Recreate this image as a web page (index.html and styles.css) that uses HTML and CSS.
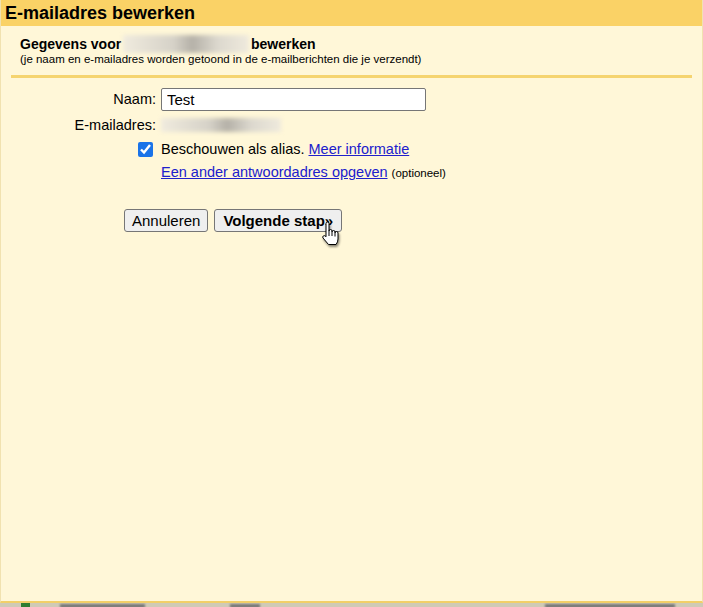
FILE: index.html
```html
<!DOCTYPE html>
<html lang="nl">

<head>
    <meta charset="UTF-8">
    <meta name="viewport" content="width=device-width, initial-scale=1.0">
    <title>E-mailadres bewerken</title>
    <link rel="stylesheet" href="styles.css">
</head>

<body>
    <div class="dialog">
        <div class="titlebar">
            <h1>E-mailadres bewerken</h1>
        </div>

        <div class="content">
            <div class="intro">
                <h2>Gegevens voor <span class="blur blur-title"></span> bewerken</h2>
                <p>(je naam en e-mailadres worden getoond in de e-mailberichten die je verzendt)</p>
            </div>
            <div class="divider"></div>

            <div class="form">
                <label class="label" for="naam">Naam:</label>
                <div class="field"><input id="naam" class="text-input" type="text" value="Test"></div>

                <span class="label">E-mailadres:</span>
                <div class="field"><span class="blur blur-mail"></span></div>

                <span class="label"><input class="check" type="checkbox" checked></span>
                <div class="field">Beschouwen als alias. <a href="#">Meer informatie</a></div>

                <span class="label"></span>
                <div class="field"><a href="#">Een ander antwoordadres opgeven</a> <small>(optioneel)</small></div>
            </div>

            <div class="buttons">
                <button class="btn">Annuleren</button>
                <button class="btn btn-next">Volgende stap»
                    <!-- muiscursor boven de knop -->
                    <svg class="cursor" width="20" height="25" viewBox="0 0 20 25">
                        <path d="M5 2.5a1.5 1.5 0 0 1 3 0V10a1.5 1.5 0 0 1 3 0v1a1.5 1.5 0 0 1 3 0v1a1.5 1.5 0 0 1 3 0V18q0 3-2 5.5H7.5L2 17a1.5 1.5 0 0 1 2.2-2L5 15.8Z"
                              fill="#fff" stroke="#000" stroke-width="1" stroke-linejoin="round"/>
                        <path d="M8 10v5M11 11v4M14 12v3.5" stroke="#000" stroke-width="1" fill="none"/>
                    </svg>
                </button>
            </div>
        </div>
    </div>

    <div class="behind">
        <span class="behind-icon"></span>
        <span class="behind-text t1"></span>
        <span class="behind-text t2"></span>
        <span class="behind-text t3"></span>
    </div>
</body>

</html>
```

FILE: styles.css
```css
* {
    box-sizing: border-box;
}

body {
    margin: 0;
    font-family: "Liberation Sans", Arial, sans-serif;
    font-size: 14px;
    color: #000;
    background: #fff7d8;
}

/* venster */
.dialog {
    height: 603px;
    display: flex;
    flex-direction: column;
    background: #fff7d8;
    border-left: 1px solid #f1e2b0;
    border-right: 1px solid #f1e2b0;
    border-bottom: 2px solid #f2cf68;
}

.titlebar {
    height: 26px;
    background: #fad266;
    padding: 3px 0 0 4px;
}

.titlebar h1 {
    margin: 0;
    font-size: 18px;
    line-height: 20px;
    font-weight: bold;
}

.content {
    flex: 1;
}

.intro {
    padding: 10px 10px 0 19px;
}

.intro h2 {
    margin: 0;
    font-size: 14px;
    line-height: 16px;
    font-weight: bold;
}

.intro p {
    margin: 0;
    font-size: 11.5px;
    line-height: 13px;
}

/* vervaagd e-mailadres */
.blur {
    display: inline-block;
    vertical-align: middle;
    background: linear-gradient(90deg, #f0ebde, #d6d2c8 40%, #b5b1a8 55%, #dcd8ce 75%, #efeadd);
    filter: blur(2px);
}

.blur-title {
    width: 126px;
    height: 18px;
    margin: -3px -2px 0 -2px;
}

.blur-mail {
    width: 120px;
    height: 14px;
    margin-top: -2px;
}

.divider {
    height: 3px;
    margin: 9px 10px 0 10px;
    background: #f5d46f;
}

/* formulier */
.form {
    display: grid;
    grid-template-columns: 145px 1fr;
    column-gap: 5px;
    row-gap: 5.5px;
    padding: 10px 0 0 10px;
    font-size: 14.5px;
    line-height: 18px;
}

.label {
    text-align: right;
    align-self: center;
}

.field {
    align-self: center;
}

.text-input {
    width: 265px;
    height: 23px;
    margin: 0;
    padding: 1px 5px 0;
    font-family: "Liberation Sans", Arial, sans-serif;
    font-size: 15px;
    border: 1px solid #767676;
    border-radius: 2px;
    background: #fff;
}

.check {
    width: 15px;
    height: 15px;
    margin: 0 3px 0 0;
    vertical-align: middle;
    accent-color: #1a73e8;
}

.form a {
    color: #2020cc;
}

.form small {
    font-size: 11.5px;
}

/* knoppen */
.buttons {
    display: flex;
    gap: 6px;
    padding: 27px 0 0 123px;
}

.btn {
    position: relative;
    height: 23px;
    padding: 0 7px;
    font-family: "Liberation Sans", Arial, sans-serif;
    font-size: 15px;
    color: #000;
    background: #efefef;
    border: 1px solid #767676;
    border-radius: 3px;
}

.btn-next {
    padding: 0 8px;
    font-weight: bold;
}

.cursor {
    position: absolute;
    left: 106px;
    top: 11px;
    filter: drop-shadow(1px 2px 1px rgba(0, 0, 0, 0.45));
}

/* achterliggend venster */
.behind {
    height: 4px;
    background: #cfcab6;
    position: relative;
    overflow: hidden;
}

.behind-icon {
    position: absolute;
    left: 21px;
    top: 0;
    width: 9px;
    height: 4px;
    background: #2e7d32;
}

.behind-text {
    position: absolute;
    top: 1px;
    height: 4px;
    background: #777;
    filter: blur(1px);
}

.t1 { left: 60px; width: 85px; }
.t2 { left: 230px; width: 30px; }
.t3 { left: 545px; width: 130px; }
```
